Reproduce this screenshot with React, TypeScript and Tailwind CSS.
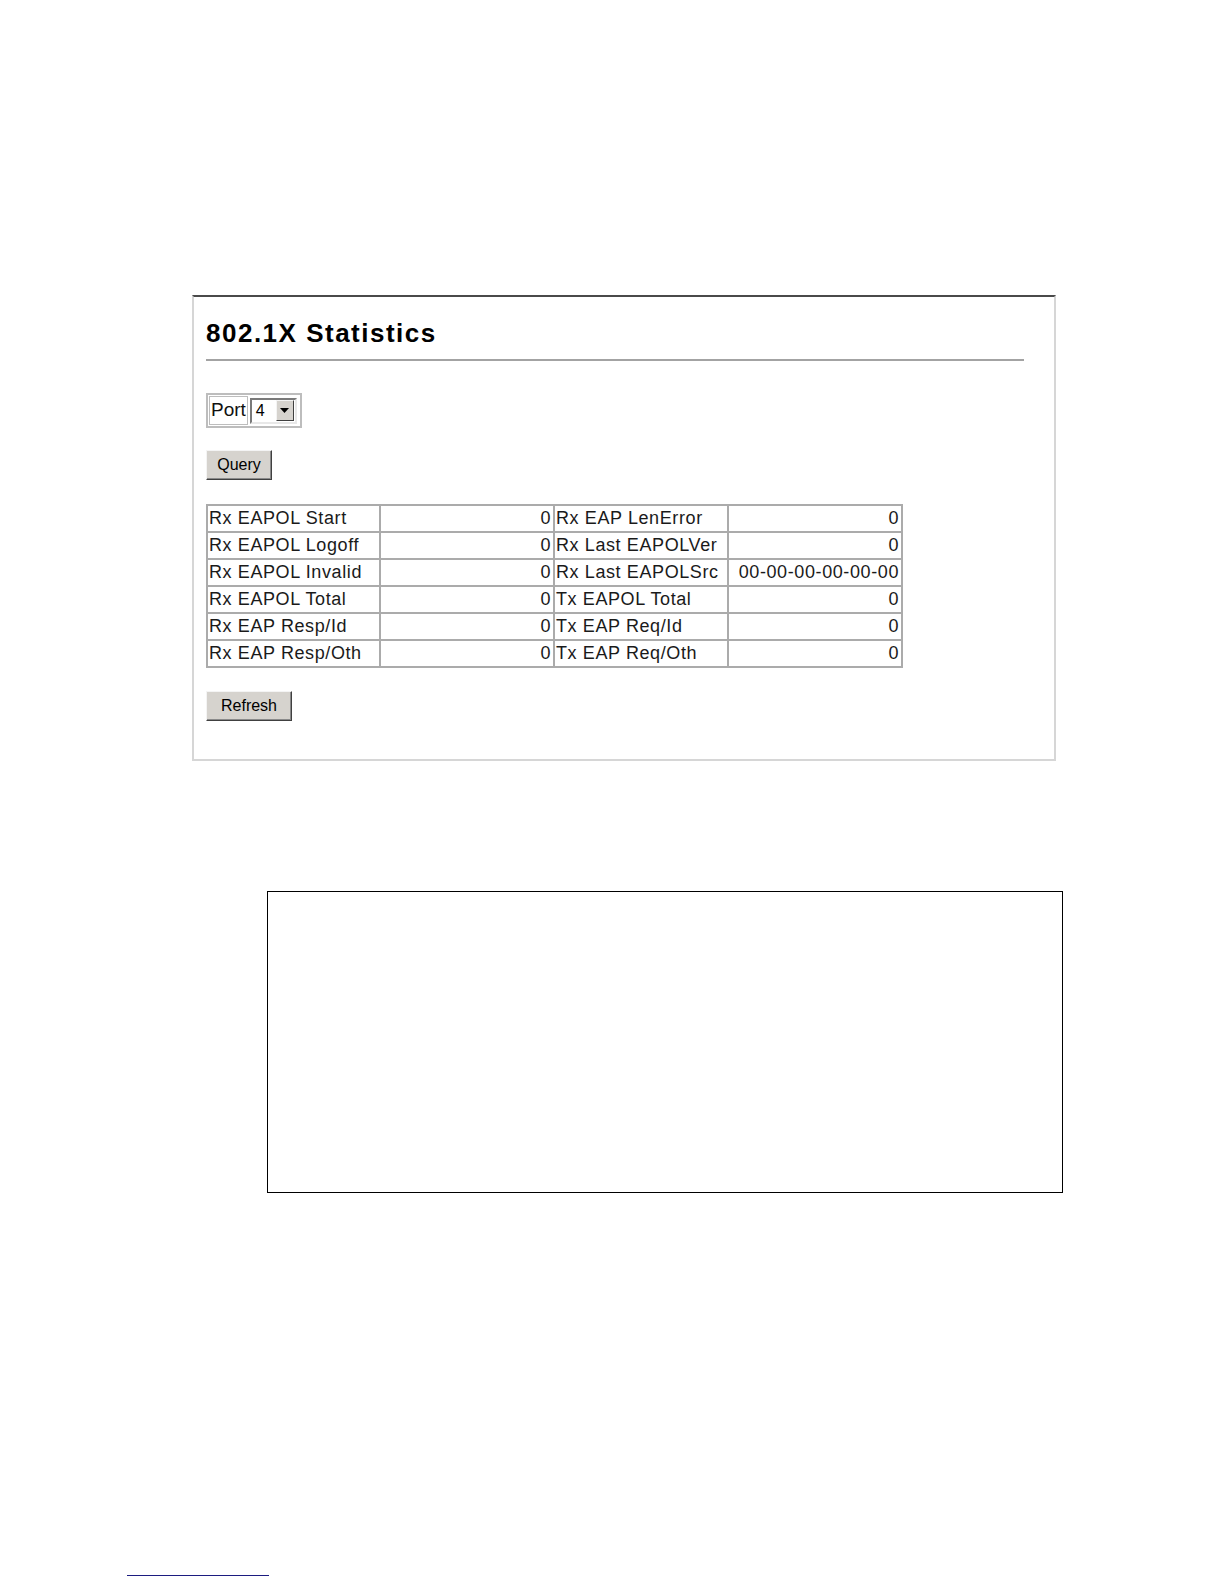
import React from 'react';

type Stat = { label: string; value: string };

const leftStats: Stat[] = [
  { label: 'Rx EAPOL Start', value: '0' },
  { label: 'Rx EAPOL Logoff', value: '0' },
  { label: 'Rx EAPOL Invalid', value: '0' },
  { label: 'Rx EAPOL Total', value: '0' },
  { label: 'Rx EAP Resp/Id', value: '0' },
  { label: 'Rx EAP Resp/Oth', value: '0' },
];

const rightStats: Stat[] = [
  { label: 'Rx EAP LenError', value: '0' },
  { label: 'Rx Last EAPOLVer', value: '0' },
  { label: 'Rx Last EAPOLSrc', value: '00-00-00-00-00-00' },
  { label: 'Tx EAPOL Total', value: '0' },
  { label: 'Tx EAP Req/Id', value: '0' },
  { label: 'Tx EAP Req/Oth', value: '0' },
];

// classic raised windows button
const WinButton: React.FC<{ label: string; width: string }> = ({ label, width }) => (
  <button
    className={`${width} h-[30px] bg-[#d6d3ce] text-[16px] text-black border border-t-[#f4f4f4] border-l-[#f4f4f4] border-r-[#404040] border-b-[#404040] shadow-[inset_-1px_-1px_0_#8a8a8a] flex items-center justify-center`}
  >
    {label}
  </button>
);

const Cell: React.FC<{ text: string; right?: boolean }> = ({ text, right }) => (
  <div
    className={`h-[27px] border-r-2 border-b-2 border-[#ababab] flex items-center whitespace-nowrap text-[18px] tracking-[0.6px] text-[#1a1a1a] ${
      right ? 'justify-end pr-[2px]' : 'pl-[1px]'
    }`}
  >
    {text}
  </div>
);

export default function App() {
  return (
    <div className="w-[1224px] h-[1584px] bg-white font-['Liberation_Sans',Arial,sans-serif] overflow-hidden">
      <div className="pt-[295px] pl-[192px]">
        {/* Panel */}
        <div className="w-[864px] h-[466px] border-2 border-[#d6d6d6] border-t-[#4a4a4a] pl-[12px]">
          <h1 className="mt-[21px] text-[26px] leading-[30px] font-bold tracking-[1.5px] text-black">
            802.1X Statistics
          </h1>
          <div className="mt-[11px] w-[818px] h-[2px] bg-[#a3a3a3]" />

          {/* Port select */}
          <div className="mt-[32px] w-[96px] h-[35px] border-2 border-[#bdbdbd] flex items-center p-[1px] gap-[2px]">
            <div className="h-full border border-[#bdbdbd] flex items-center px-[1px] text-[19px] text-[#111]">
              Port
            </div>
            <div className="w-[47px] h-[26px] border-2 border-t-[#7a7a7a] border-l-[#7a7a7a] border-r-[#e8e8e8] border-b-[#e8e8e8] flex items-center justify-between bg-white">
              <span className="pl-[4px] text-[16px] leading-none">4</span>
              <div className="w-[18px] h-[21px] mr-[1px] bg-[#d6d3ce] border border-t-[#f4f4f4] border-l-[#f4f4f4] border-r-[#404040] border-b-[#404040] flex items-center justify-center">
                <svg width="9" height="5" viewBox="0 0 9 5">
                  <polygon points="0,0 9,0 4.5,5" fill="#000" />
                </svg>
              </div>
            </div>
          </div>

          <div className="mt-[22px]">
            <WinButton label="Query" width="w-[66px]" />
          </div>

          {/* Statistics table */}
          <div className="mt-[24px] w-[697px] grid grid-cols-[173px_174px_174px_174px] border-l-2 border-t-2 border-[#ababab]">
            {leftStats.map((s, i) => (
              <React.Fragment key={s.label}>
                <Cell text={s.label} />
                <Cell text={s.value} right />
                <Cell text={rightStats[i].label} />
                <Cell text={rightStats[i].value} right />
              </React.Fragment>
            ))}
          </div>

          <div className="mt-[23px]">
            <WinButton label="Refresh" width="w-[86px]" />
          </div>
        </div>

        {/* Empty framed box */}
        <div className="mt-[130px] ml-[75px] w-[796px] h-[302px] border border-black" />
      </div>

      {/* footnote rule */}
      <div className="mt-[382px] ml-[127px] w-[142px] h-[1px] bg-[#1c1c80]" />
    </div>
  );
}
